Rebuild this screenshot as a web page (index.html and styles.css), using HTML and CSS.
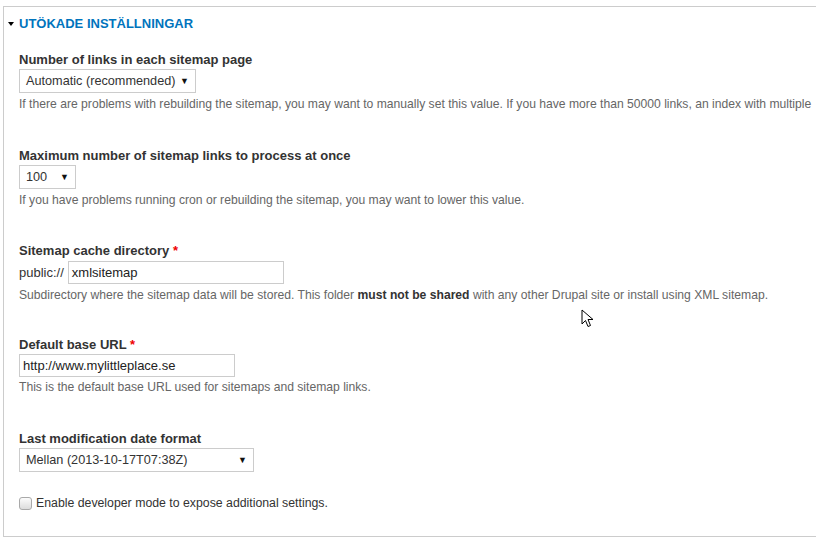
FILE: index.html
```html
<!DOCTYPE html>
<html>
<head>
<meta charset="utf-8">
<link rel="stylesheet" href="styles.css">
</head>
<body>
<div class="fieldset">
  <div class="legend"><span class="tri"></span>UTÖKADE INSTÄLLNINGAR</div>

  <div class="item item-1">
    <div class="label">Number of links in each sitemap page</div>
    <div class="select select-auto"><span>Automatic (recommended)</span><span class="arrow">▼</span></div>
    <div class="desc nowrap">If there are problems with rebuilding the sitemap, you may want to manually set this value. If you have more than 50000 links, an index with multiple</div>
  </div>

  <div class="item item-2">
    <div class="label">Maximum number of sitemap links to process at once</div>
    <div class="select select-100"><span>100</span><span class="arrow">▼</span></div>
    <div class="desc">If you have problems running cron or rebuilding the sitemap, you may want to lower this value.</div>
  </div>

  <div class="item item-3">
    <div class="label">Sitemap cache directory <span class="req">*</span></div>
    <div class="row"><span class="prefix">public://</span><div class="input input-dir">xmlsitemap</div></div>
    <div class="desc">Subdirectory where the sitemap data will be stored. This folder <strong>must not be shared</strong> with any other Drupal site or install using XML sitemap.</div>
  </div>

  <div class="item item-4">
    <div class="label">Default base URL <span class="req">*</span></div>
    <div class="input input-url">http://www.mylittleplace.se</div>
    <div class="desc desc-tight">This is the default base URL used for sitemaps and sitemap links.</div>
  </div>

  <div class="item item-5">
    <div class="label">Last modification date format</div>
    <div class="select select-date"><span>Mellan (2013-10-17T07:38Z)</span><span class="arrow">▼</span></div>
  </div>

  <div class="check-row">
    <span class="checkbox"></span>
    <span class="check-label">Enable developer mode to expose additional settings.</span>
  </div>
</div>

<svg class="cursor" width="13" height="19" viewBox="0 0 13 19">
  <path d="M1 1 L1 15 L4.5 11.5 L7 17.5 L9.5 16.5 L7 10.5 L12 10.5 Z" fill="#fff" stroke="#000" stroke-width="1" stroke-linejoin="miter"/>
</svg>
</body>
</html>
```

FILE: styles.css
```css
html, body {
  margin: 0;
  padding: 0;
  background: #fff;
  font-family: "Liberation Sans", Arial, sans-serif;
  color: #333;
  overflow: hidden;
}

.fieldset {
  box-sizing: border-box;
  margin: 6px 0 0 3px;
  height: 531px;
  border: 1px solid #cccccc;
  border-right: none;
  padding: 9px 0 0 15px;
  display: flex;
  flex-direction: column;
}

.legend {
  position: relative;
  font-size: 13px;
  line-height: 16px;
  font-weight: bold;
  color: #0074bd;
  display: flex;
  align-items: center;
}

.tri {
  position: absolute;
  left: -11px;
  top: 6px;
  width: 0;
  height: 0;
  border-left: 3px solid transparent;
  border-right: 3px solid transparent;
  border-top: 4px solid #000;
}

.item {
  display: flex;
  flex-direction: column;
  align-items: flex-start;
}

.item-1 { margin-top: 20px; }
.item-2 { margin-top: 37px; }
.item-3 { margin-top: 36px; }
.item-4 { margin-top: 35px; }
.item-5 { margin-top: 37px; }

.label {
  font-size: 13px;
  line-height: 16px;
  font-weight: bold;
  color: #333;
  margin-bottom: 1px;
}

.req {
  color: #e00;
}

.select {
  box-sizing: border-box;
  height: 24px;
  border: 1px solid #ccc;
  background: #fff;
  font-size: 12.7px;
  color: #333;
  display: flex;
  align-items: center;
  justify-content: space-between;
  padding: 0 6px 0 6px;
}

.select .arrow {
  font-size: 9px;
  color: #111;
}

.select-auto { width: 177px; }
.select-100 { width: 57px; }
.select-date { width: 235px; }

.desc {
  font-size: 12.15px;
  line-height: 14px;
  color: #666;
  margin-top: 4px;
  white-space: nowrap;
}

.desc-tight {
  margin-top: 3px;
}

.desc strong {
  color: #333;
}

.row {
  display: flex;
  align-items: center;
  gap: 4px;
  margin-top: 1px;
}

.prefix {
  font-size: 13px;
  color: #333;
}

.input {
  box-sizing: border-box;
  height: 23px;
  border: 1px solid #ccc;
  font-size: 13px;
  color: #222;
  padding: 0 3px;
  display: flex;
  align-items: center;
}

.input-dir { width: 216px; }
.input-url { width: 216px; }

.check-row {
  margin-top: 23px;
  display: flex;
  align-items: center;
  gap: 4px;
}

.checkbox {
  box-sizing: border-box;
  width: 13px;
  height: 13px;
  border: 1px solid #a9a9a9;
  border-radius: 3px;
  background: linear-gradient(#fcfcfc, #dcdcdc);
}

.check-label {
  font-size: 12.3px;
  line-height: 16px;
  color: #333;
}

.cursor {
  position: absolute;
  left: 581px;
  top: 309px;
}
```
